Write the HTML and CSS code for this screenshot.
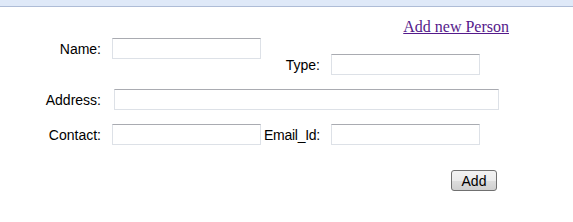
FILE: index.html
```html
<!DOCTYPE html>
<html lang="en">
<head>
  <meta charset="UTF-8">
  <title>Add Person</title>
  <link rel="stylesheet" href="styles.css">
</head>
<body>

  <div class="topbar"></div>

  <div class="page">
    <div class="header">
      <a href="#" class="add-link">Add new Person</a>
    </div>

    <div class="form">
      <label class="lbl top" for="name">Name:</label>
      <div class="cell top"><input id="name" class="box"></div>
      <label class="lbl bottom" for="type">Type:</label>
      <div class="cell bottom"><input id="type" class="box"></div>

      <label class="lbl" for="address">Address:</label>
      <div class="cell wide"><input id="address" class="box address"></div>

      <label class="lbl" for="contact">Contact:</label>
      <div class="cell"><input id="contact" class="box"></div>
      <label class="lbl tight" for="email">Email_Id:</label>
      <div class="cell"><input id="email" class="box"></div>

      <div class="actions">
        <button class="btn">Add</button>
      </div>
    </div>
  </div>

</body>
</html>
```

FILE: styles.css
```css
body {
  margin: 0;
  background: #fff;
  font-family: "Liberation Sans", Arial, sans-serif;
  font-size: 14px;
  color: #000;
}
.topbar {
  height: 6px;
  background: #dfe9f8;
  border-bottom: 1px solid #aebcd6;
}
.page {
  width: 509px;
}
.header {
  text-align: right;
  padding-top: 11px;
  height: 20px;
}
.add-link {
  font-family: "Liberation Serif", "Times New Roman", serif;
  font-size: 16px;
  line-height: 18px;
  color: #551a8b;
}
.form {
  display: grid;
  grid-template-columns: 112px 152px 67px 168px;
  grid-template-rows: 37px 21px 21px auto;
  row-gap: 14px;
}
.lbl {
  box-sizing: border-box;
  display: flex;
  justify-content: flex-end;
  padding: 1px 11px 0 0;
  line-height: 21px;
  height: 21px;
  min-width: 0;
  white-space: nowrap;
}
.lbl.tight {
  letter-spacing: -0.25px;
}
.top { align-self: start; }
.bottom { align-self: end; }
.cell { height: 21px; }
.wide { grid-column: 2 / 5; }
.box {
  box-sizing: border-box;
  display: block;
  width: 149px;
  height: 21px;
  margin: 0;
  padding: 1px 3px;
  border: 1px solid #dde1e7;
  border-top-color: #a9abb1;
  background: #fff;
  font: 13px "Liberation Sans", Arial, sans-serif;
}
.box.address {
  width: 385px;
  margin-left: 2px;
}
.actions {
  grid-column: 1 / 5;
  display: flex;
  justify-content: flex-end;
  padding-right: 2px;
  margin-top: 11px;
}
.btn {
  box-sizing: border-box;
  width: 46px;
  height: 21px;
  padding: 0;
  border: 1px solid #707070;
  border-radius: 3px;
  background: linear-gradient(#f2f2f2 0%, #ebebeb 50%, #dddddd 51%, #cfcfcf 100%);
  font: 14px "Liberation Sans", Arial, sans-serif;
  color: #000;
  cursor: pointer;
}
```
